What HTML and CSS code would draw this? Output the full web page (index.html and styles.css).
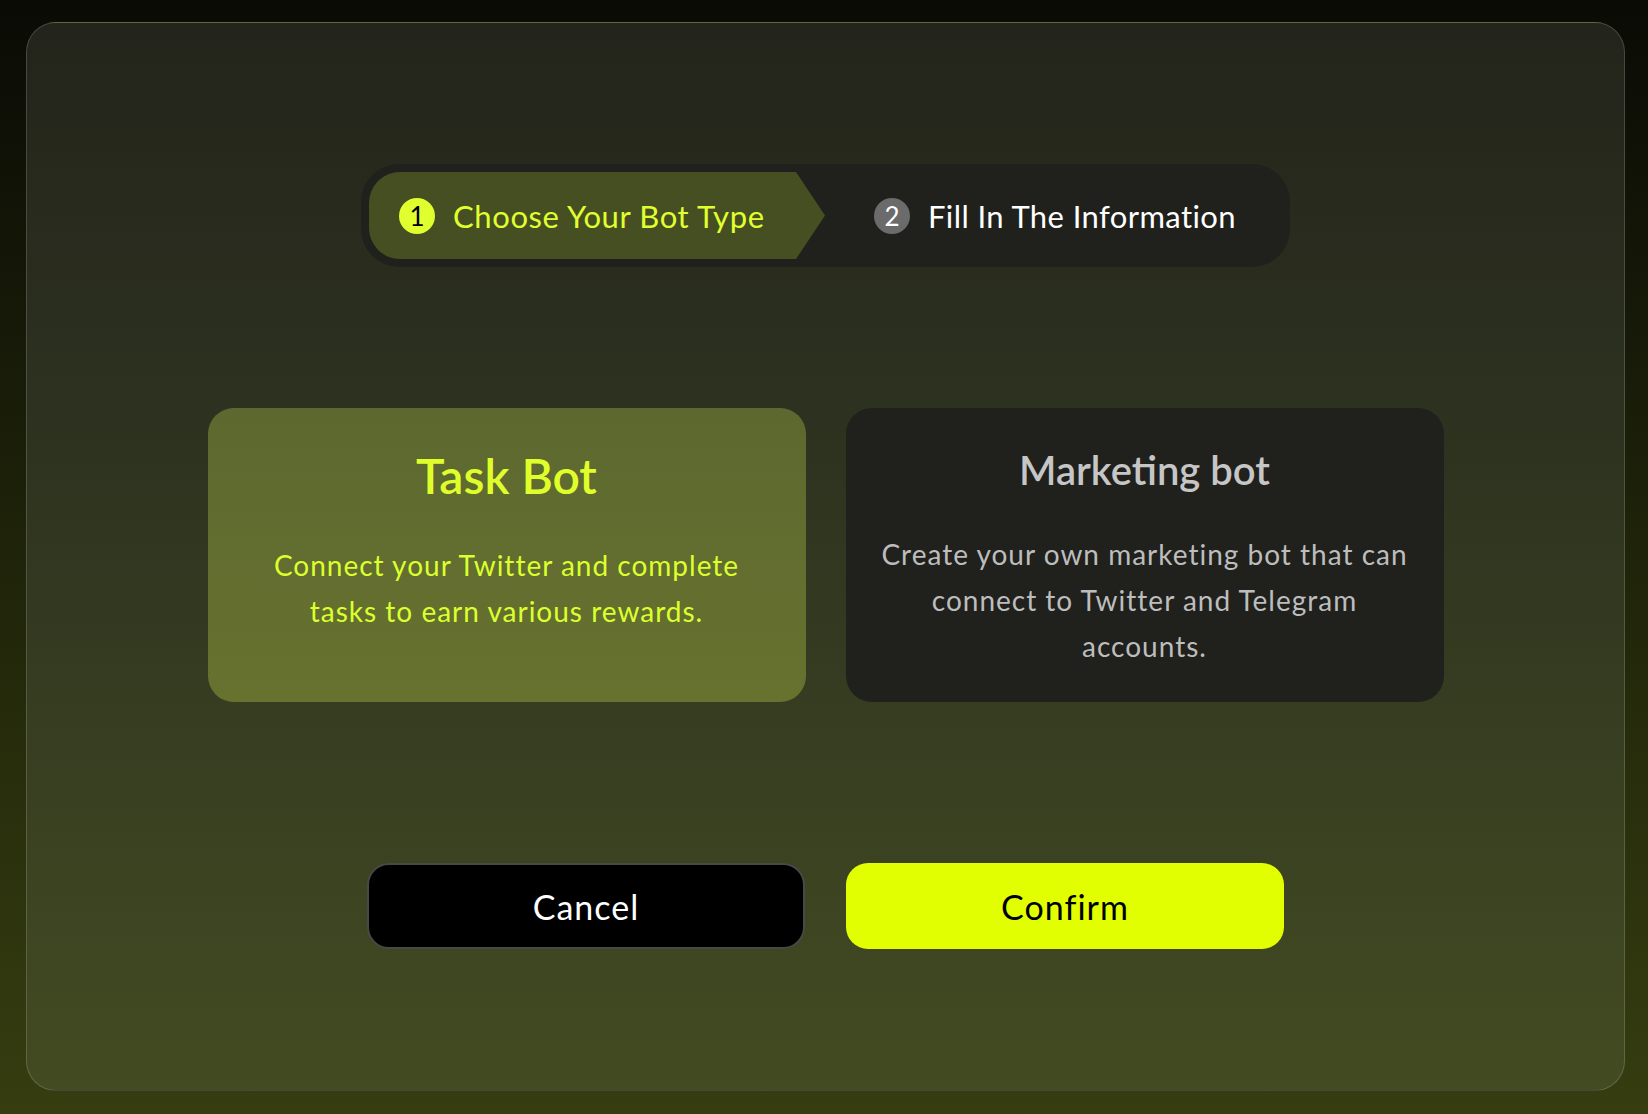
FILE: index.html
```html
<!DOCTYPE html>
<html lang="en">
<head>
  <meta charset="UTF-8">
  <meta name="viewport" content="width=device-width, initial-scale=1.0">
  <title>Create Bot - Choose Your Bot Type</title>
  <link rel="stylesheet" href="styles.css">
</head>
<body>
  <div class="modal">
    <div class="stepper">
      <div class="step step-active">
        <span class="step-num">1</span>
        <span class="step-label">Choose Your Bot Type</span>
      </div>
      <div class="step step-next">
        <span class="step-num">2</span>
        <span class="step-label">Fill In The Information</span>
      </div>
    </div>

    <div class="bot-types">
      <div class="bot-card selected">
        <h2>Task Bot</h2>
        <p>Connect your Twitter and complete tasks to earn various rewards.</p>
      </div>
      <div class="bot-card">
        <h2>Marketing bot</h2>
        <p>Create your own marketing bot that can connect to Twitter and Telegram accounts.</p>
      </div>
    </div>

    <div class="actions">
      <button type="button" class="btn btn-cancel">Cancel</button>
      <button type="button" class="btn btn-confirm">Confirm</button>
    </div>
  </div>
</body>
</html>
```

FILE: styles.css
```css
* {
    box-sizing: border-box;
}
html, body {
    height: 100%;
}
body {
    font-family: Lato, "Noto Sans", sans-serif;
    margin: 0;
    padding: 22px 23px 23px 26px;
    background: linear-gradient(180deg, #0a0b05 0%, #1d2109 45%, #363d10 100%);
    color: #fff;
}
.modal {
    height: 100%;
    border: 1px solid rgba(255, 255, 255, 0.16);
    border-radius: 30px;
    background: linear-gradient(180deg, #23241b 0%, #2e3320 40%, #434b22 100%);
    padding-top: 141px;
    display: flex;
    flex-direction: column;
    align-items: center;
}

/* stepper */
.stepper {
    width: 929px;
    height: 103px;
    padding: 8px;
    background-color: #20211c;
    border-radius: 38px;
    display: flex;
}
.step {
    display: flex;
    align-items: center;
    gap: 18px;
    font-size: 31px;
}
.step-label {
    letter-spacing: 0.6px;
}
.step-active {
    width: 456px;
    padding-left: 30px;
    background-color: #464f22;
    color: #e0ff2e;
    border-radius: 31px 0 0 31px;
    clip-path: polygon(0 0, calc(100% - 29px) 0, 100% 50%, calc(100% - 29px) 100%, 0 100%);
}
.step-next {
    padding-left: 49px;
    color: #fff;
}
.step-next .step-label {
    letter-spacing: 0.4px;
}
.step-num {
    width: 36px;
    height: 36px;
    border-radius: 50%;
    display: flex;
    align-items: center;
    justify-content: center;
    font-size: 26px;
    flex-shrink: 0;
}
.step-active .step-num {
    background-color: #e0ff2e;
    color: #000;
}
.step-next .step-num {
    background-color: #6b6b6b;
    color: #fff;
}

/* bot type cards */
.bot-types {
    margin-top: 141px;
    display: flex;
    gap: 40px;
}
.bot-card {
    width: 598px;
    height: 294px;
    border-radius: 26px;
    background-color: #20211d;
    text-align: center;
    padding: 34px 29px 0;
    display: flex;
    flex-direction: column;
    align-items: center;
}
.bot-card h2 {
    margin: 0;
    font-size: 40px;
    line-height: 56px;
    font-weight: 600;
    color: #c6c6c6;
}
.bot-card p {
    margin: 33px 0 0;
    max-width: 540px;
    font-size: 28px;
    line-height: 46px;
    letter-spacing: 1px;
    color: #bdbdbd;
}
.bot-card.selected {
    background: linear-gradient(180deg, #5d6830 0%, #67722f 100%);
    padding-top: 40px;
}
.bot-card.selected h2 {
    font-size: 48px;
    color: #e0ff2a;
}
.bot-card.selected p {
    margin-top: 38px;
    max-width: 505px;
    color: #dcff2e;
}

/* buttons */
.actions {
    margin-top: 161px;
    display: flex;
    gap: 41px;
}
.btn {
    width: 438px;
    height: 86px;
    border-radius: 22px;
    font-family: inherit;
    font-size: 34px;
    letter-spacing: 1px;
    cursor: pointer;
}
.btn-cancel {
    background-color: #000;
    color: #fff;
    border: 2px solid #484848;
}
.btn-confirm {
    background-color: #e1ff00;
    color: #000;
    border: none;
}
```
